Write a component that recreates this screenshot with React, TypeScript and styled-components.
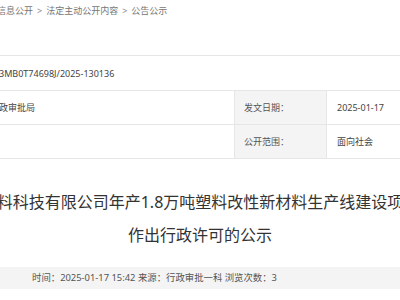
import React from "react";
import styled, { createGlobalStyle } from "styled-components";

const Global = createGlobalStyle`
  html, body { margin: 0; padding: 0; background: #fff; overflow: hidden; }
  body { font-family: "Noto Sans", "Noto Sans CJK SC", sans-serif; }
`;

const Frame = styled.div`
  width: 720px;
  margin-left: -160px;
`;

const Crumbs = styled.nav`
  height: 20px;
  display: flex;
  align-items: center;
  padding-left: 157px;
  font-size: 9px;
  color: #777;
  white-space: nowrap;
`;

const Sep = styled.span`
  margin: 0 4px;
  color: #888;
`;

const Table = styled.div`
  margin-top: 35px;
  display: grid;
  grid-template-columns: 113px 281px 93px 1fr;
  grid-template-rows: 35px 34px 34px;
  border-top: 1px solid #e6e6e6;
`;

const Cell = styled.div<{ $label?: boolean; $span?: number; $divided?: boolean }>`
  box-sizing: border-box;
  display: flex;
  align-items: center;
  padding: 0 0 0 ${(p) => (p.$label ? "9px" : "10px")};
  border-bottom: 1px solid #e6e6e6;
  font-size: 9px;
  white-space: nowrap;
  color: ${(p) => (p.$label ? "#555" : "#444")};
  background: ${(p) => (p.$divided ? "#f4f4f4" : "transparent")};
  ${(p) => (p.$divided ? "border-left: 1px solid #e6e6e6; border-right: 1px solid #e6e6e6;" : "")}
  ${(p) => (p.$span ? `grid-column: span ${p.$span};` : "")}
`;

const Title = styled.h1`
  margin: 27px 0 0;
  font-size: 16px;
  line-height: 33px;
  font-weight: normal;
  color: #333;
  text-align: center;
`;

const TitleLine = styled.span`
  display: block;
  white-space: nowrap;
`;

const Meta = styled.div`
  margin-top: 15px;
  height: 22px;
  line-height: 22px;
  background: #f4f4f4;
  padding-left: 192px;
  font-size: 9.4px;
  color: #555;
  white-space: nowrap;
`;

const crumbs = ["信息公开", "法定主动公开内容", "公告公示"];

export default function App() {
  return (
    <>
      <Global />
      <Frame>
        <Crumbs>
          {crumbs.map((c, i) => (
            <React.Fragment key={c}>
              {i > 0 && <Sep>&gt;</Sep>}
              <span>{c}</span>
            </React.Fragment>
          ))}
        </Crumbs>
        <Table>
          <Cell $label>索引号：</Cell>
          <Cell $span={3}>11370883MB0T74698J/2025-130136</Cell>
          <Cell $label>发布机构：</Cell>
          <Cell>邹城市行政审批局</Cell>
          <Cell $label $divided>发文日期：</Cell>
          <Cell>2025-01-17</Cell>
          <Cell $label>文　　号：</Cell>
          <Cell></Cell>
          <Cell $label $divided>公开范围：</Cell>
          <Cell>面向社会</Cell>
        </Table>
        <Title>
          <TitleLine>塑料科技有限公司年产1.8万吨塑料改性新材料生产线建设项目</TitleLine>
          <TitleLine>作出行政许可的公示</TitleLine>
        </Title>
        <Meta>时间：2025-01-17 15:42 来源：行政审批一科 浏览次数：3</Meta>
      </Frame>
    </>
  );
}
